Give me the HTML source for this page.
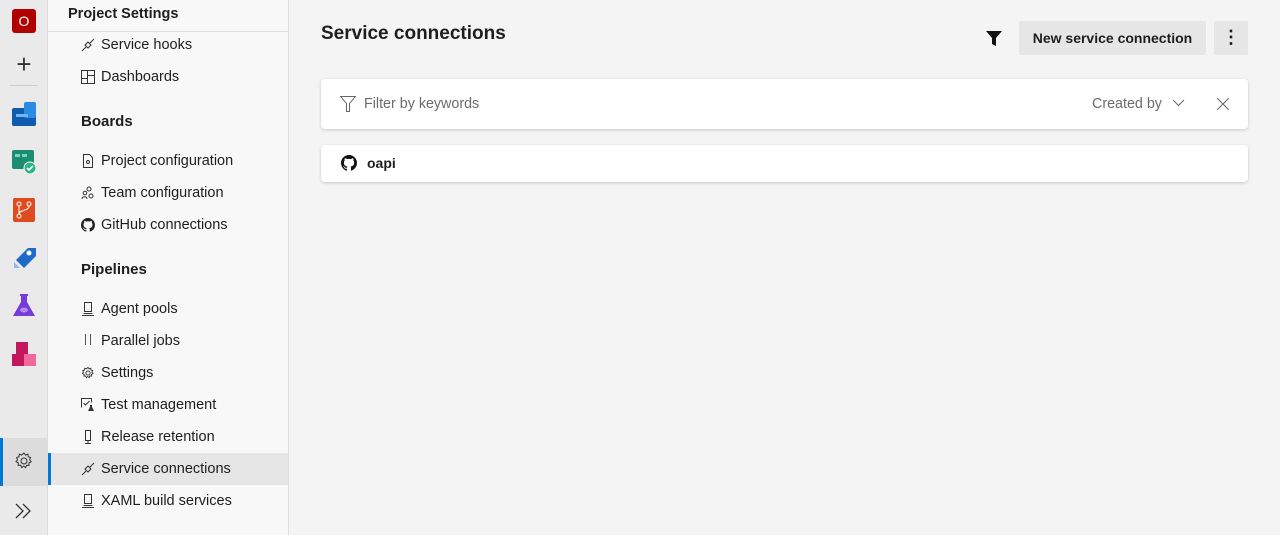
<!DOCTYPE html>
<html><head><meta charset="utf-8"><style>
*{box-sizing:border-box;margin:0;padding:0}
body{width:1280px;height:535px;overflow:hidden;background:#f4f4f4;font-family:"Liberation Sans",sans-serif;color:#1e1e1e;position:relative}
.rail{position:absolute;left:0;top:0;width:48px;height:535px;background:#eaeaea;border-right:1px solid #dcdcdc}
.rail .ic{position:absolute;left:12px;width:24px;height:24px}
.nav{position:absolute;left:48px;top:0;width:241px;height:535px;background:#f8f8f8;border-right:1px solid #e0e0e0}
.nav .title{position:absolute;left:20px;top:6px;font-size:14.5px;font-weight:bold}
.nav .sep{position:absolute;left:0;right:0;top:31px;border-top:1px solid #e0e0e0}
.item{position:absolute;left:0;width:240px;height:32px;font-size:14.5px;line-height:32px;padding-left:53px}
.item svg{position:absolute;left:33px;top:9px}
.grp{position:absolute;left:33px;font-size:15px;font-weight:bold}
.sel{background:#e6e6e6}
.sel:before{content:"";position:absolute;left:0;top:0;width:3px;height:32px;background:#0078d4}
.main h1{position:absolute;left:321px;top:23px;font-size:19px;font-weight:bold}
.card{position:absolute;left:321px;width:927px;background:#fff;border-radius:4px;box-shadow:0 1px 3px rgba(0,0,0,.18)}
.btn{position:absolute;top:21px;height:34px;background:#e6e6e6;border-radius:2px;font-size:14px;font-weight:bold;line-height:34px;text-align:center}
</style></head><body>
<div class="rail">
 <div class="ic" style="top:9px;background:#b00000;border-radius:3px;color:#fff;font-size:14px;text-align:center;line-height:24px">O</div>
 <div class="ic" style="top:53px;font-size:26px;line-height:22px;text-align:center;color:#333;font-weight:300">+</div>
 <div style="position:absolute;left:10px;top:85px;width:27px;border-top:1px solid #ccc"></div>
 <svg class="ic" style="top:102px" viewBox="0 0 24 24"><rect x="0" y="6" width="24" height="18" rx="2" fill="#0f5cad"/><rect x="12" y="0" width="12" height="16" rx="2" fill="#2b8ae2"/><rect x="4" y="12" width="12" height="3" fill="#6fb6f5"/></svg>
 <svg class="ic" style="top:150px" viewBox="0 0 24 24"><rect x="0" y="0" width="22" height="19" rx="2" fill="#1c8d70"/><rect x="3" y="4" width="5" height="3" fill="#7ad5b8"/><rect x="10" y="4" width="5" height="3" fill="#7ad5b8"/><circle cx="18" cy="18" r="6" fill="#2bb38a" stroke="#fff" stroke-width="1"/><path d="M15 18l2 2 4-4" stroke="#fff" stroke-width="1.6" fill="none"/></svg>
 <svg class="ic" style="top:198px" viewBox="0 0 24 24"><rect x="1" y="0" width="22" height="24" rx="2" fill="#dd4b1f"/><circle cx="7" cy="6" r="2" fill="none" stroke="#fff"/><circle cx="17" cy="6" r="2" fill="none" stroke="#fff"/><circle cx="7" cy="18" r="2" fill="none" stroke="#fff"/><path d="M7 8v8M17 8c0 5-10 4-10 8" stroke="#fff" fill="none"/></svg>
 <svg class="ic" style="top:246px" viewBox="0 0 24 24"><path d="M4 14L16 2h8v8L12 22z" fill="#1f69c9"/><path d="M2 16l6 6H2z" fill="#8fb8ef"/><circle cx="17" cy="7" r="2.5" fill="#fff"/></svg>
 <svg class="ic" style="top:294px" viewBox="0 0 24 24"><path d="M8 0h8v2h-1v6l8 14H1L9 8V2H8z" fill="#773adc"/><ellipse cx="12" cy="16" rx="4" ry="2.5" fill="#b08ee8"/></svg>
 <svg class="ic" style="top:342px" viewBox="0 0 24 24"><rect x="4" y="0" width="12" height="12" fill="#c2185b"/><rect x="0" y="12" width="12" height="12" fill="#c2185b"/><rect x="12" y="12" width="12" height="12" fill="#ef6a9a"/></svg>
 <div style="position:absolute;left:0;top:438px;width:47px;height:48px;background:#dcdcdc"></div>
 <div style="position:absolute;left:0;top:438px;width:3px;height:48px;background:#0078d4"></div>
 <svg class="ic" style="top:451px;left:14px;width:20px;height:20px" viewBox="0 0 20 20"><circle cx="10" cy="10" r="3" fill="none" stroke="#333"/><path d="M10 2l1.5 2 2.4-.8.3 2.5 2.4.8-1 2.3 1.6 1.9-2.3 1.2.2 2.5-2.5-.1-1 2.3-1.9-1.5-2 1.5-1-2.3-2.5.1.2-2.5L2 10.7l1.6-1.9-1-2.3L5 5.7l.3-2.5 2.4.8z" fill="none" stroke="#333"/></svg>
 <svg class="ic" style="top:502px;left:14px;width:20px;height:18px" viewBox="0 0 20 18"><path d="M2 2l7 7-7 7M9 2l7 7-7 7" fill="none" stroke="#333" stroke-width="1.3"/></svg>
</div>
<div class="nav">
 <div class="title">Project Settings</div><div class="sep"></div>
 <div class="item" style="top:29px"><svg width="14" height="14" viewBox="0 0 14 14"><path d="M1 13l4-4M9 5l4-4M4 7l3 3 3-3-3-3z" stroke="#333" fill="none"/></svg>Service hooks</div>
 <div class="item" style="top:61px"><svg width="14" height="14" viewBox="0 0 14 14"><path d="M.5.5h13v13H.5zM6.5.5v13M.5 8.5h6M6.5 5.5h7" stroke="#333" fill="none"/></svg>Dashboards</div>
 <div class="grp" style="top:113px">Boards</div>
 <div class="item" style="top:145px"><svg width="14" height="14" viewBox="0 0 14 14"><path d="M2.5.5h6l3 3v10h-9z" stroke="#333" fill="none"/><circle cx="7" cy="8" r="1.5" stroke="#333" fill="none"/></svg>Project configuration</div>
 <div class="item" style="top:177px"><svg width="14" height="14" viewBox="0 0 14 14"><circle cx="8" cy="3" r="2" stroke="#333" fill="none"/><circle cx="4" cy="7" r="1.8" stroke="#333" fill="none"/><circle cx="10" cy="10" r="2" stroke="#333" fill="none"/><path d="M1 13c0-3 5-3 5 0" stroke="#333" fill="none"/></svg>Team configuration</div>
 <div class="item" style="top:209px"><svg width="14" height="14" viewBox="0 0 16 16"><path fill="#222" d="M8 0C3.58 0 0 3.580 0 8c0 3.54 2.29 6.53 5.47 7.59.4.07.55-.17.55-.38 0-.19-.01-.82-.01-1.49-2.01.37-2.53-.49-2.69-.94-.09-.23-.48-.94-.82-1.13-.28-.15-.68-.52-.01-.53.63-.01 1.08.58 1.23.82.72 1.21 1.87.87 2.33.66.07-.52.28-.87.51-1.07-1.78-.2-3.64-.89-3.64-3.95 0-.87.31-1.59.82-2.15-.08-.2-.36-1.02.08-2.12 0 0 .67-.21 2.2.82.64-.18 1.32-.27 2-.27.68 0 1.36.09 2 .27 1.53-1.04 2.2-.82 2.2-.82.44 1.1.16 1.92.08 2.12.51.56.82 1.27.82 2.15 0 3.07-1.87 3.75-3.65 3.95.29.25.54.73.54 1.48 0 1.07-.01 1.93-.01 2.2 0 .21.15.46.55.38A8.013 8.013 0 0016 8c0-4.42-3.58-8-8-8z"/></svg>GitHub connections</div>
 <div class="grp" style="top:261px">Pipelines</div>
 <div class="item" style="top:293px"><svg width="14" height="14" viewBox="0 0 14 14"><path d="M3.5.5h7v9h-7zM1 13.5h12M2.5 11.5h9" stroke="#333" fill="none"/></svg>Agent pools</div>
 <div class="item" style="top:325px"><svg width="14" height="14" viewBox="0 0 14 14"><path d="M4.5 0v11M9.5 0v11" stroke="#555" fill="none"/></svg>Parallel jobs</div>
 <div class="item" style="top:357px"><svg width="14" height="14" viewBox="0 0 20 20"><circle cx="10" cy="10" r="3" fill="none" stroke="#333" stroke-width="1.3"/><path d="M10 2l1.5 2 2.4-.8.3 2.5 2.4.8-1 2.3 1.6 1.9-2.3 1.2.2 2.5-2.5-.1-1 2.3-1.9-1.5-2 1.5-1-2.3-2.5.1.2-2.5L2 10.7l1.6-1.9-1-2.3L5 5.7l.3-2.5 2.4.8z" fill="none" stroke="#333" stroke-width="1.3"/></svg>Settings</div>
 <div class="item" style="top:389px"><svg width="14" height="14" viewBox="0 0 14 14"><path d="M.5 9.5V.5h10v4M2.5 5l2 2 4-4" stroke="#333" fill="none"/><path d="M9 7h2v2l2 4H7l2-4z" fill="#333"/></svg>Test management</div>
 <div class="item" style="top:421px"><svg width="14" height="14" viewBox="0 0 14 14"><path d="M4.5.5h5v10h-5zM7 10.5v3M4 13.5h6" stroke="#333" fill="none"/></svg>Release retention</div>
 <div class="item sel" style="top:453px"><svg width="14" height="14" viewBox="0 0 14 14"><path d="M1 13l4-4M9 5l4-4M4 7l3 3 3-3-3-3z" stroke="#333" fill="none"/></svg>Service connections</div>
 <div class="item" style="top:485px"><svg width="14" height="14" viewBox="0 0 14 14"><path d="M3.5.5h7v9h-7zM1 13.5h12M2.5 11.5h9" stroke="#333" fill="none"/></svg>XAML build services</div>
</div>
<div class="main">
 <h1>Service connections</h1>
 <svg style="position:absolute;left:986px;top:31px" width="16" height="15" viewBox="0 0 16 15"><path d="M0 0h16L10 7v8L6 13V7z" fill="#111"/></svg>
 <div class="btn" style="left:1019px;width:187px">New service connection</div>
 <div class="btn" style="left:1214px;width:34px;font-size:18px;line-height:32px">⋮</div>
 <div class="card" style="top:79px;height:50px">
  <svg style="position:absolute;left:19px;top:17px" width="16" height="16" viewBox="0 0 16 16"><path d="M.5.5h15L9.5 7.5v8h-3v-8z" stroke="#666" fill="none"/></svg>
  <span style="position:absolute;left:43px;top:17px;font-size:14.3px;color:#6b6b6b">Filter by keywords</span>
  <span style="position:absolute;left:771px;top:17px;font-size:14.3px;color:#6b6b6b">Created by</span>
  <svg style="position:absolute;left:851px;top:20px" width="13" height="8" viewBox="0 0 13 8"><path d="M1 1l5.5 5.5L12 1" stroke="#666" fill="none"/></svg>
  <svg style="position:absolute;left:896px;top:19px" width="12" height="12" viewBox="0 0 12 12"><path d="M0 0l12 12M12 0L0 12" stroke="#666" fill="none"/></svg>
 </div>
 <div class="card" style="top:145px;height:37px">
  <svg style="position:absolute;left:20px;top:10px" width="16" height="16" viewBox="0 0 16 16"><path fill="#111" d="M8 0C3.58 0 0 3.58 0 8c0 3.54 2.29 6.53 5.47 7.59.4.07.55-.17.55-.38 0-.19-.01-.82-.01-1.49-2.01.37-2.53-.49-2.69-.94-.09-.23-.48-.94-.82-1.13-.28-.15-.68-.52-.01-.53.63-.01 1.08.58 1.23.82.72 1.21 1.87.87 2.33.66.07-.52.28-.87.51-1.07-1.78-.2-3.64-.89-3.64-3.95 0-.87.31-1.59.82-2.15-.08-.2-.36-1.02.08-2.12 0 0 .67-.21 2.2.82.64-.18 1.32-.27 2-.27.68 0 1.36.09 2 .27 1.53-1.04 2.2-.82 2.2-.82.44 1.1.16 1.92.08 2.12.51.56.82 1.27.82 2.15 0 3.07-1.87 3.75-3.65 3.95.29.25.54.73.54 1.48 0 1.07-.01 1.93-.01 2.2 0 .21.15.46.55.38A8.013 8.013 0 0016 8c0-4.42-3.58-8-8-8z"/></svg>
  <span style="position:absolute;left:46px;top:10px;font-size:14px;font-weight:bold">oapi</span>
 </div>
</div>
</body></html>
